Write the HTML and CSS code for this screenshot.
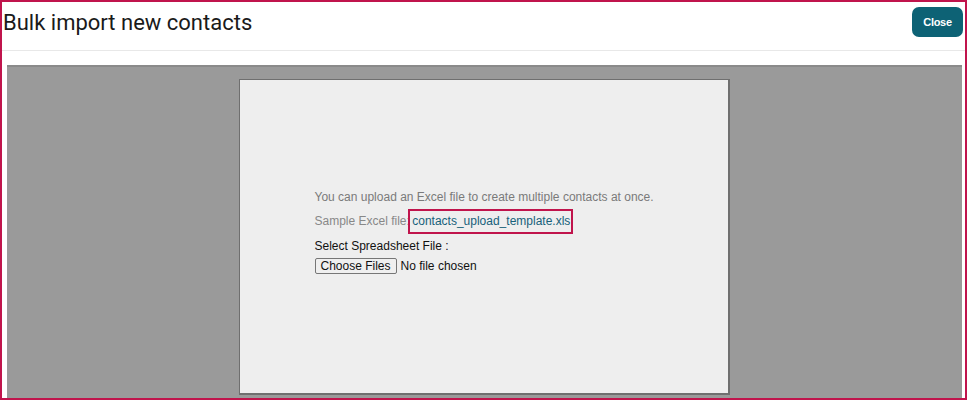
FILE: index.html
```html
<!DOCTYPE html>
<html>
<head>
<meta charset="utf-8">
<link rel="stylesheet" href="styles.css">
</head>
<body>
<div class="frame">
  <header class="header">
    <h1 class="title">Bulk import new contacts</h1>
    <button class="close">Close</button>
  </header>
  <div class="stage">
    <div class="panel">
      <div class="content">
        <p class="info">You can upload an Excel file to create multiple contacts at once.</p>
        <p class="sample">Sample Excel file: <span class="mark"><a class="link" href="#">contacts_upload_template.xls</a></span></p>
        <div class="label">Select Spreadsheet File :</div>
        <div class="file"><span class="choose">Choose Files</span><span class="none">No file chosen</span></div>
      </div>
    </div>
  </div>
</div>
</body>
</html>
```
FILE: styles.css
```css
html, body { margin: 0; padding: 0; background: #fff; }
body { font-family: "Liberation Sans", Arial, sans-serif; }
.frame {
  width: 967px; height: 400px; box-sizing: border-box;
  border: 2px solid #c0144c;
  display: flex; flex-direction: column; overflow: hidden;
}
.header {
  height: 48px; flex: none; display: flex; align-items: flex-start; justify-content: space-between;
  border-bottom: 1px solid #e8e8e8; padding: 0 2px 0 1px;
}
.title {
  margin: 8px 0 0 0; font-family: Roboto, "Liberation Sans", sans-serif; font-weight: 400; font-size: 22px; color: #1a1a1a;
}
.close {
  margin-top: 5px; width: 51px; height: 30px; border: none; border-radius: 7px;
  background: #0d6275; color: #fff; font-family: "Liberation Sans", Arial, sans-serif; font-weight: 700; font-size: 11px;
  letter-spacing: -0.3px; padding: 0;
}
.stage {
  margin: 14px 3px 0 5px; flex: 1; background: #9a9a9a; border-top: 2px solid #8a8a8a;
  display: flex; justify-content: center; padding-top: 12px;
}
.panel {
  width: 488px; height: 313px; background: #eeeeee;
  border: 1px solid #6f6f6f; border-right-width: 2px; border-bottom-width: 2px;
  margin-left: -1px;
}
.content { padding: 109px 0 0 75px; font-size: 12px; }
.info { margin: 0; color: #7a7a7a; line-height: 16px; }
.sample { margin: 8px 0 0 0; color: #888; line-height: 16px; }
.mark { border: 2px solid #c0144c; padding: 3px 1px 4px 2px; margin-left: -5px; }
.link { color: #17617a; text-decoration: none; }
.label { margin-top: 9px; color: #111; line-height: 16px; }
.file { display: flex; align-items: center; margin-top: 4px; }
.choose {
  border: 1px solid #767676; background: #efefef; color: #111; padding: 0 5px; height: 14px; line-height: 14px;
  font-size: 12px; border-radius: 2px;
}
.none { margin-left: 4px; color: #111; font-size: 12px; }
```
